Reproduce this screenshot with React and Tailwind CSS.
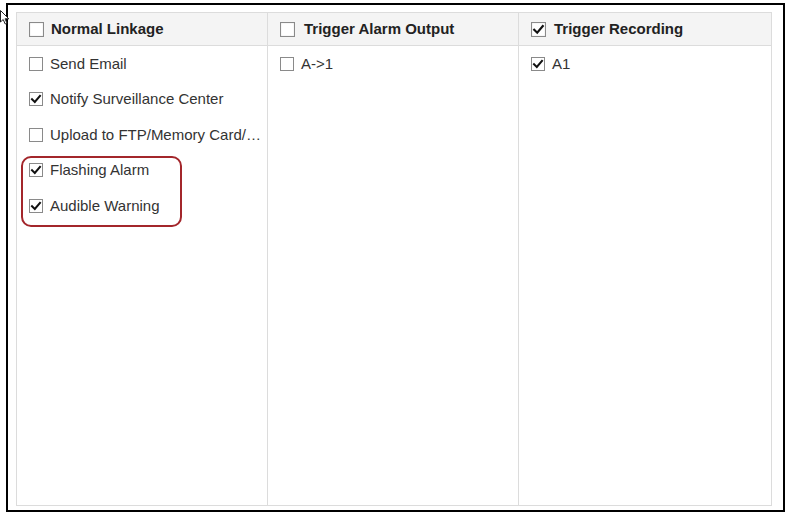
import React from "react";

function Box({ checked, size = 14 }) {
  return (
    <svg width={size} height={size} viewBox="0 0 14 14" className="shrink-0">
      <rect x="0.5" y="0.5" width="13" height="13" fill="#fff" stroke="#8a8a8a" strokeWidth="1" />
      {checked && (
        <path d="M3 7.2 L5.8 10 L11 3.8" fill="none" stroke="#111" strokeWidth="2" strokeLinecap="square" />
      )}
    </svg>
  );
}

function Header({ label, checked, gap }) {
  return (
    <div className={`flex h-[33px] items-center border-b border-[#dcdcdc] bg-[#f4f4f4] pl-[12px] ${gap}`}>
      <Box checked={checked} size={15} />
      <span className="text-[15px] font-bold text-[#222]">{label}</span>
    </div>
  );
}

function Row({ label, checked, gap }) {
  return (
    <div className={`flex h-[35.5px] items-center pl-[12px] pr-[4px] ${gap}`}>
      <Box checked={checked} />
      <span className="whitespace-nowrap text-[15px] text-[#333]">{label}</span>
    </div>
  );
}

export default function App() {
  return (
    <div className="relative h-[517px] w-[789px] bg-white" style={{ fontFamily: '"Liberation Sans", Arial, sans-serif' }}>
      <div className="ml-[6px] mt-[3px] h-[509px] w-[779px] border-2 border-black pb-[5px] pl-[8px] pr-[11px] pt-[7px]">
        <div className="grid h-[494px] w-[756px] grid-cols-[251px_251px_252px] border border-[#dcdcdc]">
          <div className="overflow-hidden border-r border-[#dcdcdc]">
            <Header label="Normal Linkage" checked={false} gap="gap-[7px]" />
            <Row label="Send Email" checked={false} gap="gap-[7px]" />
            <Row label="Notify Surveillance Center" checked gap="gap-[7px]" />
            <Row label="Upload to FTP/Memory Card/…" checked={false} gap="gap-[7px]" />
            <Row label="Flashing Alarm" checked gap="gap-[7px]" />
            <Row label="Audible Warning" checked gap="gap-[7px]" />
          </div>
          <div className="border-r border-[#dcdcdc]">
            <Header label="Trigger Alarm Output" checked={false} gap="gap-[9px]" />
            <Row label="A->1" checked={false} gap="gap-[7px]" />
          </div>
          <div>
            <Header label="Trigger Recording" checked gap="gap-[8px]" />
            <Row label="A1" checked gap="gap-[7px]" />
          </div>
        </div>
      </div>
      <div className="absolute left-[21px] top-[153px] h-[71px] w-[161px] rounded-[10px] border-2 border-[#a3262b]" />
      <svg className="absolute left-0 top-[7px]" width="12" height="16" viewBox="0 0 12 16">
        <path d="M0.5 0.5 L0.5 12 L3.2 9.5 L5.2 14 L7 13.2 L5 8.8 L8.8 8.8 Z" fill="#fff" stroke="#222" strokeWidth="1" />
      </svg>
    </div>
  );
}
